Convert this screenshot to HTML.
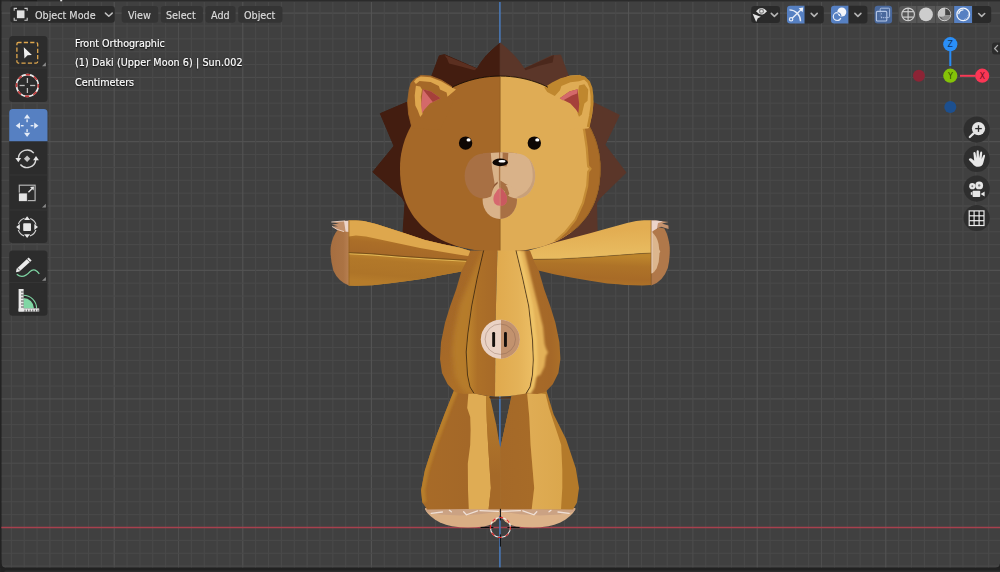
<!DOCTYPE html>
<html><head><meta charset="utf-8"><title>Blender viewport</title>
<style>
html,body{margin:0;padding:0;background:#212121;overflow:hidden}
#vp{position:absolute;left:0;top:0;width:1000px;height:572px;overflow:hidden;background:#212121;font-family:"DejaVu Sans Condensed","DejaVu Sans","Liberation Sans",sans-serif;font-stretch:condensed;font-size:10.7px;color:#e0e0e0}
svg{position:absolute;left:0;top:0}
.t{position:absolute;white-space:nowrap;line-height:13px;will-change:transform}
.ov{color:#fff;-webkit-text-stroke:0.2px rgba(255,255,255,.9);text-shadow:0 1px 1.5px rgba(0,0,0,.85),0 0 2px rgba(0,0,0,.6)}
.btn{position:absolute;background:#2b2b2b;border-radius:3.5px}
.menu{position:absolute;background:#343434;border-radius:3.5px;top:6px;height:17px}
</style></head><body>
<div id="vp">
<svg width="1000" height="572" viewBox="0 0 1000 572">
<rect x="1.3" y="1" width="998.7" height="566.7" rx="4.5" fill="#404040"/>
<rect x="1.3" y="1" width="998.7" height="10" fill="#404040"/>
<g stroke-width="1" shape-rendering="auto">
<line x1="1.5" y1="13.10" x2="1000" y2="13.10" stroke="#555555"/>
<line x1="1.5" y1="25.96" x2="1000" y2="25.96" stroke="#4a4a4a"/>
<line x1="11.32" y1="2" x2="11.32" y2="567.6" stroke="#4a4a4a"/>
<line x1="1.5" y1="38.82" x2="1000" y2="38.82" stroke="#4a4a4a"/>
<line x1="24.18" y1="2" x2="24.18" y2="567.6" stroke="#4a4a4a"/>
<line x1="1.5" y1="51.68" x2="1000" y2="51.68" stroke="#4a4a4a"/>
<line x1="37.04" y1="2" x2="37.04" y2="567.6" stroke="#4a4a4a"/>
<line x1="1.5" y1="64.54" x2="1000" y2="64.54" stroke="#4a4a4a"/>
<line x1="49.90" y1="2" x2="49.90" y2="567.6" stroke="#4e4e4e"/>
<line x1="1.5" y1="77.40" x2="1000" y2="77.40" stroke="#4e4e4e"/>
<line x1="62.76" y1="2" x2="62.76" y2="567.6" stroke="#4a4a4a"/>
<line x1="1.5" y1="90.26" x2="1000" y2="90.26" stroke="#4a4a4a"/>
<line x1="75.62" y1="2" x2="75.62" y2="567.6" stroke="#4a4a4a"/>
<line x1="1.5" y1="103.12" x2="1000" y2="103.12" stroke="#4a4a4a"/>
<line x1="88.48" y1="2" x2="88.48" y2="567.6" stroke="#4a4a4a"/>
<line x1="1.5" y1="115.98" x2="1000" y2="115.98" stroke="#4a4a4a"/>
<line x1="101.34" y1="2" x2="101.34" y2="567.6" stroke="#4a4a4a"/>
<line x1="1.5" y1="128.84" x2="1000" y2="128.84" stroke="#4a4a4a"/>
<line x1="114.20" y1="2" x2="114.20" y2="567.6" stroke="#555555"/>
<line x1="1.5" y1="141.70" x2="1000" y2="141.70" stroke="#555555"/>
<line x1="127.06" y1="2" x2="127.06" y2="567.6" stroke="#4a4a4a"/>
<line x1="1.5" y1="154.56" x2="1000" y2="154.56" stroke="#4a4a4a"/>
<line x1="139.92" y1="2" x2="139.92" y2="567.6" stroke="#4a4a4a"/>
<line x1="1.5" y1="167.42" x2="1000" y2="167.42" stroke="#4a4a4a"/>
<line x1="152.78" y1="2" x2="152.78" y2="567.6" stroke="#4a4a4a"/>
<line x1="1.5" y1="180.28" x2="1000" y2="180.28" stroke="#4a4a4a"/>
<line x1="165.64" y1="2" x2="165.64" y2="567.6" stroke="#4a4a4a"/>
<line x1="1.5" y1="193.14" x2="1000" y2="193.14" stroke="#4a4a4a"/>
<line x1="178.50" y1="2" x2="178.50" y2="567.6" stroke="#4e4e4e"/>
<line x1="1.5" y1="206.00" x2="1000" y2="206.00" stroke="#4e4e4e"/>
<line x1="191.36" y1="2" x2="191.36" y2="567.6" stroke="#4a4a4a"/>
<line x1="1.5" y1="218.86" x2="1000" y2="218.86" stroke="#4a4a4a"/>
<line x1="204.22" y1="2" x2="204.22" y2="567.6" stroke="#4a4a4a"/>
<line x1="1.5" y1="231.72" x2="1000" y2="231.72" stroke="#4a4a4a"/>
<line x1="217.08" y1="2" x2="217.08" y2="567.6" stroke="#4a4a4a"/>
<line x1="1.5" y1="244.58" x2="1000" y2="244.58" stroke="#4a4a4a"/>
<line x1="229.94" y1="2" x2="229.94" y2="567.6" stroke="#4a4a4a"/>
<line x1="1.5" y1="257.44" x2="1000" y2="257.44" stroke="#4a4a4a"/>
<line x1="242.80" y1="2" x2="242.80" y2="567.6" stroke="#555555"/>
<line x1="1.5" y1="270.30" x2="1000" y2="270.30" stroke="#555555"/>
<line x1="255.66" y1="2" x2="255.66" y2="567.6" stroke="#4a4a4a"/>
<line x1="1.5" y1="283.16" x2="1000" y2="283.16" stroke="#4a4a4a"/>
<line x1="268.52" y1="2" x2="268.52" y2="567.6" stroke="#4a4a4a"/>
<line x1="1.5" y1="296.02" x2="1000" y2="296.02" stroke="#4a4a4a"/>
<line x1="281.38" y1="2" x2="281.38" y2="567.6" stroke="#4a4a4a"/>
<line x1="1.5" y1="308.88" x2="1000" y2="308.88" stroke="#4a4a4a"/>
<line x1="294.24" y1="2" x2="294.24" y2="567.6" stroke="#4a4a4a"/>
<line x1="1.5" y1="321.74" x2="1000" y2="321.74" stroke="#4a4a4a"/>
<line x1="307.10" y1="2" x2="307.10" y2="567.6" stroke="#4e4e4e"/>
<line x1="1.5" y1="334.60" x2="1000" y2="334.60" stroke="#4e4e4e"/>
<line x1="319.96" y1="2" x2="319.96" y2="567.6" stroke="#4a4a4a"/>
<line x1="1.5" y1="347.46" x2="1000" y2="347.46" stroke="#4a4a4a"/>
<line x1="332.82" y1="2" x2="332.82" y2="567.6" stroke="#4a4a4a"/>
<line x1="1.5" y1="360.32" x2="1000" y2="360.32" stroke="#4a4a4a"/>
<line x1="345.68" y1="2" x2="345.68" y2="567.6" stroke="#4a4a4a"/>
<line x1="1.5" y1="373.18" x2="1000" y2="373.18" stroke="#4a4a4a"/>
<line x1="358.54" y1="2" x2="358.54" y2="567.6" stroke="#4a4a4a"/>
<line x1="1.5" y1="386.04" x2="1000" y2="386.04" stroke="#4a4a4a"/>
<line x1="371.40" y1="2" x2="371.40" y2="567.6" stroke="#555555"/>
<line x1="1.5" y1="398.90" x2="1000" y2="398.90" stroke="#555555"/>
<line x1="384.26" y1="2" x2="384.26" y2="567.6" stroke="#4a4a4a"/>
<line x1="1.5" y1="411.76" x2="1000" y2="411.76" stroke="#4a4a4a"/>
<line x1="397.12" y1="2" x2="397.12" y2="567.6" stroke="#4a4a4a"/>
<line x1="1.5" y1="424.62" x2="1000" y2="424.62" stroke="#4a4a4a"/>
<line x1="409.98" y1="2" x2="409.98" y2="567.6" stroke="#4a4a4a"/>
<line x1="1.5" y1="437.48" x2="1000" y2="437.48" stroke="#4a4a4a"/>
<line x1="422.84" y1="2" x2="422.84" y2="567.6" stroke="#4a4a4a"/>
<line x1="1.5" y1="450.34" x2="1000" y2="450.34" stroke="#4a4a4a"/>
<line x1="435.70" y1="2" x2="435.70" y2="567.6" stroke="#4e4e4e"/>
<line x1="1.5" y1="463.20" x2="1000" y2="463.20" stroke="#4e4e4e"/>
<line x1="448.56" y1="2" x2="448.56" y2="567.6" stroke="#4a4a4a"/>
<line x1="1.5" y1="476.06" x2="1000" y2="476.06" stroke="#4a4a4a"/>
<line x1="461.42" y1="2" x2="461.42" y2="567.6" stroke="#4a4a4a"/>
<line x1="1.5" y1="488.92" x2="1000" y2="488.92" stroke="#4a4a4a"/>
<line x1="474.28" y1="2" x2="474.28" y2="567.6" stroke="#4a4a4a"/>
<line x1="1.5" y1="501.78" x2="1000" y2="501.78" stroke="#4a4a4a"/>
<line x1="487.14" y1="2" x2="487.14" y2="567.6" stroke="#4a4a4a"/>
<line x1="1.5" y1="514.64" x2="1000" y2="514.64" stroke="#4a4a4a"/>
<line x1="512.86" y1="2" x2="512.86" y2="567.6" stroke="#4a4a4a"/>
<line x1="1.5" y1="540.36" x2="1000" y2="540.36" stroke="#4a4a4a"/>
<line x1="525.72" y1="2" x2="525.72" y2="567.6" stroke="#4a4a4a"/>
<line x1="1.5" y1="553.22" x2="1000" y2="553.22" stroke="#4a4a4a"/>
<line x1="538.58" y1="2" x2="538.58" y2="567.6" stroke="#4a4a4a"/>
<line x1="1.5" y1="566.08" x2="1000" y2="566.08" stroke="#4a4a4a"/>
<line x1="551.44" y1="2" x2="551.44" y2="567.6" stroke="#4a4a4a"/>
<line x1="564.30" y1="2" x2="564.30" y2="567.6" stroke="#4e4e4e"/>
<line x1="577.16" y1="2" x2="577.16" y2="567.6" stroke="#4a4a4a"/>
<line x1="590.02" y1="2" x2="590.02" y2="567.6" stroke="#4a4a4a"/>
<line x1="602.88" y1="2" x2="602.88" y2="567.6" stroke="#4a4a4a"/>
<line x1="615.74" y1="2" x2="615.74" y2="567.6" stroke="#4a4a4a"/>
<line x1="628.60" y1="2" x2="628.60" y2="567.6" stroke="#555555"/>
<line x1="641.46" y1="2" x2="641.46" y2="567.6" stroke="#4a4a4a"/>
<line x1="654.32" y1="2" x2="654.32" y2="567.6" stroke="#4a4a4a"/>
<line x1="667.18" y1="2" x2="667.18" y2="567.6" stroke="#4a4a4a"/>
<line x1="680.04" y1="2" x2="680.04" y2="567.6" stroke="#4a4a4a"/>
<line x1="692.90" y1="2" x2="692.90" y2="567.6" stroke="#4e4e4e"/>
<line x1="705.76" y1="2" x2="705.76" y2="567.6" stroke="#4a4a4a"/>
<line x1="718.62" y1="2" x2="718.62" y2="567.6" stroke="#4a4a4a"/>
<line x1="731.48" y1="2" x2="731.48" y2="567.6" stroke="#4a4a4a"/>
<line x1="744.34" y1="2" x2="744.34" y2="567.6" stroke="#4a4a4a"/>
<line x1="757.20" y1="2" x2="757.20" y2="567.6" stroke="#555555"/>
<line x1="770.06" y1="2" x2="770.06" y2="567.6" stroke="#4a4a4a"/>
<line x1="782.92" y1="2" x2="782.92" y2="567.6" stroke="#4a4a4a"/>
<line x1="795.78" y1="2" x2="795.78" y2="567.6" stroke="#4a4a4a"/>
<line x1="808.64" y1="2" x2="808.64" y2="567.6" stroke="#4a4a4a"/>
<line x1="821.50" y1="2" x2="821.50" y2="567.6" stroke="#4e4e4e"/>
<line x1="834.36" y1="2" x2="834.36" y2="567.6" stroke="#4a4a4a"/>
<line x1="847.22" y1="2" x2="847.22" y2="567.6" stroke="#4a4a4a"/>
<line x1="860.08" y1="2" x2="860.08" y2="567.6" stroke="#4a4a4a"/>
<line x1="872.94" y1="2" x2="872.94" y2="567.6" stroke="#4a4a4a"/>
<line x1="885.80" y1="2" x2="885.80" y2="567.6" stroke="#555555"/>
<line x1="898.66" y1="2" x2="898.66" y2="567.6" stroke="#4a4a4a"/>
<line x1="911.52" y1="2" x2="911.52" y2="567.6" stroke="#4a4a4a"/>
<line x1="924.38" y1="2" x2="924.38" y2="567.6" stroke="#4a4a4a"/>
<line x1="937.24" y1="2" x2="937.24" y2="567.6" stroke="#4a4a4a"/>
<line x1="950.10" y1="2" x2="950.10" y2="567.6" stroke="#4e4e4e"/>
<line x1="962.96" y1="2" x2="962.96" y2="567.6" stroke="#4a4a4a"/>
<line x1="975.82" y1="2" x2="975.82" y2="567.6" stroke="#4a4a4a"/>
<line x1="988.68" y1="2" x2="988.68" y2="567.6" stroke="#4a4a4a"/>
</g>
<!-- axes -->
<line x1="0" y1="527.5" x2="1000" y2="527.5" stroke="#a8404e" stroke-width="1.6"/>
<line x1="499.9" y1="2" x2="499.9" y2="567.6" stroke="#4a78b5" stroke-width="1.6"/>
<defs>
<clipPath id="cl"><rect x="0" y="0" width="500.2" height="572"/></clipPath>
<clipPath id="cr"><rect x="500.2" y="0" width="500" height="572"/></clipPath>
<clipPath id="chead"><path d="M600.4,168.0 L600.3,174.4 L599.9,179.7 L599.3,184.6 L598.5,189.3 L597.4,193.8 L596.1,198.1 L594.6,202.2 L592.8,206.2 L590.8,210.0 L588.6,213.7 L586.2,217.2 L583.5,220.6 L580.7,223.8 L577.6,226.9 L574.3,229.8 L570.9,232.5 L567.2,235.1 L563.3,237.4 L559.3,239.7 L555.0,241.7 L550.6,243.5 L546.0,245.2 L541.3,246.7 L536.3,247.9 L531.1,249.0 L525.8,249.9 L520.2,250.6 L514.3,251.1 L507.9,251.4 L500.2,251.5 L492.5,251.4 L486.1,251.1 L480.2,250.6 L474.6,249.9 L469.3,249.0 L464.1,247.9 L459.1,246.7 L454.4,245.2 L449.8,243.5 L445.4,241.7 L441.1,239.7 L437.1,237.4 L433.2,235.1 L429.5,232.5 L426.1,229.8 L422.8,226.9 L419.7,223.8 L416.9,220.6 L414.2,217.2 L411.8,213.7 L409.6,210.0 L407.6,206.2 L405.8,202.2 L404.3,198.1 L403.0,193.8 L401.9,189.3 L401.1,184.6 L400.5,179.7 L400.1,174.4 L400.0,168.0 L400.1,163.2 L400.5,158.4 L401.2,153.6 L402.2,148.9 L403.4,144.2 L404.9,139.6 L406.7,135.1 L408.7,130.6 L410.9,126.3 L413.4,122.1 L416.2,117.9 L419.1,114.0 L422.3,110.2 L425.7,106.5 L429.3,103.0 L433.2,99.7 L437.1,96.6 L441.3,93.7 L445.6,90.9 L450.1,88.4 L454.7,86.1 L459.4,84.0 L464.3,82.2 L469.2,80.6 L474.3,79.2 L479.4,78.1 L484.5,77.2 L489.7,76.6 L495.0,76.2 L500.2,76.1 L505.4,76.2 L510.7,76.6 L515.9,77.2 L521.0,78.1 L526.1,79.2 L531.2,80.6 L536.1,82.2 L541.0,84.0 L545.7,86.1 L550.3,88.4 L554.8,90.9 L559.1,93.7 L563.3,96.6 L567.2,99.7 L571.1,103.0 L574.7,106.5 L578.1,110.2 L581.3,114.0 L584.2,117.9 L587.0,122.1 L589.5,126.3 L591.7,130.6 L593.7,135.1 L595.5,139.6 L597.0,144.2 L598.2,148.9 L599.2,153.6 L599.9,158.4 L600.3,163.2Z"/></clipPath>
<linearGradient id="gBody" gradientUnits="userSpaceOnUse" x1="440" y1="0" x2="560" y2="0"><stop offset="0" stop-color="#a86c24"/><stop offset="0.1" stop-color="#c48e30"/><stop offset="0.2" stop-color="#cf9a38"/><stop offset="0.235" stop-color="#c9922f"/><stop offset="0.25" stop-color="#b67a28"/><stop offset="0.4" stop-color="#bb802a"/><stop offset="0.47" stop-color="#c48a30"/><stop offset="0.478" stop-color="#e4b258"/><stop offset="0.72" stop-color="#e2ad50"/><stop offset="0.77" stop-color="#c79032"/><stop offset="0.88" stop-color="#bd862e"/><stop offset="0.92" stop-color="#d8a444"/><stop offset="1" stop-color="#dca848"/></linearGradient>
<linearGradient id="gLegL" gradientUnits="userSpaceOnUse" x1="421" y1="0" x2="500" y2="0"><stop offset="0" stop-color="#b27626"/><stop offset="0.3" stop-color="#bd842c"/><stop offset="0.58" stop-color="#c48c30"/><stop offset="0.6" stop-color="#e2ab4e"/><stop offset="0.84" stop-color="#e0a84a"/><stop offset="0.88" stop-color="#b67c2a"/><stop offset="1" stop-color="#b0762a"/></linearGradient>
<linearGradient id="gLegR" gradientUnits="userSpaceOnUse" x1="500" y1="0" x2="579" y2="0"><stop offset="0" stop-color="#a86c26"/><stop offset="0.33" stop-color="#aa7026"/><stop offset="0.36" stop-color="#dba446"/><stop offset="0.6" stop-color="#d49a3c"/><stop offset="0.8" stop-color="#c08830"/><stop offset="1" stop-color="#b47a2a"/></linearGradient>
</defs>
<path d="M500.2,43 L493.6,48.6 L486.6,55.2 L481,62.4 L477,68.8 L444.5,54.6 L439.3,55.8 L431,78 L420,100 L406,102.6 L380.3,113.6 L394,146 L372.8,172 L402,197.5 L405,203 L402.5,240 L500.2,250 Z" fill="#431d10" stroke="#431d10" stroke-width="1" stroke-linejoin="round"/>
<path d="M500.2,43 L506.8,48.6 L513.8,55.2 L519.8,62.4 L524.2,68.8 L551,56 L560.5,55 L568,75 L580,100 L593.5,102.5 L619.3,115.2 L604.9,144.8 L626,172.6 L600,198 L596.5,203 L597.3,240 L500.2,250 Z" fill="#5b3629" stroke="#5b3629" stroke-width="1" stroke-linejoin="round"/>
<path d="M444.5,55 L476.8,68.6 L474.5,70.2 L461,66.4 L449,63.4 L447,58.4 Z" fill="#5b2f20"/>
<path d="M524.2,68.6 L554,55 L552.6,62.6 L539,65.8 L525.6,70.2 Z" fill="#4b281c"/>
<path d="M600.4,168.0 L600.3,174.4 L599.9,179.7 L599.3,184.6 L598.5,189.3 L597.4,193.8 L596.1,198.1 L594.6,202.2 L592.8,206.2 L590.8,210.0 L588.6,213.7 L586.2,217.2 L583.5,220.6 L580.7,223.8 L577.6,226.9 L574.3,229.8 L570.9,232.5 L567.2,235.1 L563.3,237.4 L559.3,239.7 L555.0,241.7 L550.6,243.5 L546.0,245.2 L541.3,246.7 L536.3,247.9 L531.1,249.0 L525.8,249.9 L520.2,250.6 L514.3,251.1 L507.9,251.4 L500.2,251.5 L492.5,251.4 L486.1,251.1 L480.2,250.6 L474.6,249.9 L469.3,249.0 L464.1,247.9 L459.1,246.7 L454.4,245.2 L449.8,243.5 L445.4,241.7 L441.1,239.7 L437.1,237.4 L433.2,235.1 L429.5,232.5 L426.1,229.8 L422.8,226.9 L419.7,223.8 L416.9,220.6 L414.2,217.2 L411.8,213.7 L409.6,210.0 L407.6,206.2 L405.8,202.2 L404.3,198.1 L403.0,193.8 L401.9,189.3 L401.1,184.6 L400.5,179.7 L400.1,174.4 L400.0,168.0 L400.1,163.2 L400.5,158.4 L401.2,153.6 L402.2,148.9 L403.4,144.2 L404.9,139.6 L406.7,135.1 L408.7,130.6 L410.9,126.3 L413.4,122.1 L416.2,117.9 L419.1,114.0 L422.3,110.2 L425.7,106.5 L429.3,103.0 L433.2,99.7 L437.1,96.6 L441.3,93.7 L445.6,90.9 L450.1,88.4 L454.7,86.1 L459.4,84.0 L464.3,82.2 L469.2,80.6 L474.3,79.2 L479.4,78.1 L484.5,77.2 L489.7,76.6 L495.0,76.2 L500.2,76.1 L505.4,76.2 L510.7,76.6 L515.9,77.2 L521.0,78.1 L526.1,79.2 L531.2,80.6 L536.1,82.2 L541.0,84.0 L545.7,86.1 L550.3,88.4 L554.8,90.9 L559.1,93.7 L563.3,96.6 L567.2,99.7 L571.1,103.0 L574.7,106.5 L578.1,110.2 L581.3,114.0 L584.2,117.9 L587.0,122.1 L589.5,126.3 L591.7,130.6 L593.7,135.1 L595.5,139.6 L597.0,144.2 L598.2,148.9 L599.2,153.6 L599.9,158.4 L600.3,163.2Z" fill="#a56828"/>
<path d="M600.4,168.0 L600.3,174.4 L599.9,179.7 L599.3,184.6 L598.5,189.3 L597.4,193.8 L596.1,198.1 L594.6,202.2 L592.8,206.2 L590.8,210.0 L588.6,213.7 L586.2,217.2 L583.5,220.6 L580.7,223.8 L577.6,226.9 L574.3,229.8 L570.9,232.5 L567.2,235.1 L563.3,237.4 L559.3,239.7 L555.0,241.7 L550.6,243.5 L546.0,245.2 L541.3,246.7 L536.3,247.9 L531.1,249.0 L525.8,249.9 L520.2,250.6 L514.3,251.1 L507.9,251.4 L500.2,251.5 L492.5,251.4 L486.1,251.1 L480.2,250.6 L474.6,249.9 L469.3,249.0 L464.1,247.9 L459.1,246.7 L454.4,245.2 L449.8,243.5 L445.4,241.7 L441.1,239.7 L437.1,237.4 L433.2,235.1 L429.5,232.5 L426.1,229.8 L422.8,226.9 L419.7,223.8 L416.9,220.6 L414.2,217.2 L411.8,213.7 L409.6,210.0 L407.6,206.2 L405.8,202.2 L404.3,198.1 L403.0,193.8 L401.9,189.3 L401.1,184.6 L400.5,179.7 L400.1,174.4 L400.0,168.0 L400.1,163.2 L400.5,158.4 L401.2,153.6 L402.2,148.9 L403.4,144.2 L404.9,139.6 L406.7,135.1 L408.7,130.6 L410.9,126.3 L413.4,122.1 L416.2,117.9 L419.1,114.0 L422.3,110.2 L425.7,106.5 L429.3,103.0 L433.2,99.7 L437.1,96.6 L441.3,93.7 L445.6,90.9 L450.1,88.4 L454.7,86.1 L459.4,84.0 L464.3,82.2 L469.2,80.6 L474.3,79.2 L479.4,78.1 L484.5,77.2 L489.7,76.6 L495.0,76.2 L500.2,76.1 L505.4,76.2 L510.7,76.6 L515.9,77.2 L521.0,78.1 L526.1,79.2 L531.2,80.6 L536.1,82.2 L541.0,84.0 L545.7,86.1 L550.3,88.4 L554.8,90.9 L559.1,93.7 L563.3,96.6 L567.2,99.7 L571.1,103.0 L574.7,106.5 L578.1,110.2 L581.3,114.0 L584.2,117.9 L587.0,122.1 L589.5,126.3 L591.7,130.6 L593.7,135.1 L595.5,139.6 L597.0,144.2 L598.2,148.9 L599.2,153.6 L599.9,158.4 L600.3,163.2Z" fill="#dfac55" clip-path="url(#cr)"/>
<g clip-path="url(#chead)"><polygon points="577,106 581,117 584.3,131 586.8,148 587.8,162 588.2,166.4 590.6,168.8 588.2,171.6 587.2,186 583,203 575.4,219.6 565.4,232 555,241.6 620,245 620,100" fill="#a96c28"/><polyline points="577,106 581,117 584.3,131 586.8,148 587.8,162 588.2,166.4 590.6,168.8 588.2,171.6 587.2,186 583,203 575.4,219.6 565.4,232 555,241.6" fill="none" stroke="#c48c36" stroke-width="2.2" stroke-linejoin="round"/></g>
<clipPath id="crim"><rect x="570" y="120" width="40" height="112"/></clipPath>
<path d="M600.4,168.0 L600.3,174.4 L599.9,179.7 L599.3,184.6 L598.5,189.3 L597.4,193.8 L596.1,198.1 L594.6,202.2 L592.8,206.2 L590.8,210.0 L588.6,213.7 L586.2,217.2 L583.5,220.6 L580.7,223.8 L577.6,226.9 L574.3,229.8 L570.9,232.5 L567.2,235.1 L563.3,237.4 L559.3,239.7 L555.0,241.7 L550.6,243.5 L546.0,245.2 L541.3,246.7 L536.3,247.9 L531.1,249.0 L525.8,249.9 L520.2,250.6 L514.3,251.1 L507.9,251.4 L500.2,251.5 L492.5,251.4 L486.1,251.1 L480.2,250.6 L474.6,249.9 L469.3,249.0 L464.1,247.9 L459.1,246.7 L454.4,245.2 L449.8,243.5 L445.4,241.7 L441.1,239.7 L437.1,237.4 L433.2,235.1 L429.5,232.5 L426.1,229.8 L422.8,226.9 L419.7,223.8 L416.9,220.6 L414.2,217.2 L411.8,213.7 L409.6,210.0 L407.6,206.2 L405.8,202.2 L404.3,198.1 L403.0,193.8 L401.9,189.3 L401.1,184.6 L400.5,179.7 L400.1,174.4 L400.0,168.0 L400.1,163.2 L400.5,158.4 L401.2,153.6 L402.2,148.9 L403.4,144.2 L404.9,139.6 L406.7,135.1 L408.7,130.6 L410.9,126.3 L413.4,122.1 L416.2,117.9 L419.1,114.0 L422.3,110.2 L425.7,106.5 L429.3,103.0 L433.2,99.7 L437.1,96.6 L441.3,93.7 L445.6,90.9 L450.1,88.4 L454.7,86.1 L459.4,84.0 L464.3,82.2 L469.2,80.6 L474.3,79.2 L479.4,78.1 L484.5,77.2 L489.7,76.6 L495.0,76.2 L500.2,76.1 L505.4,76.2 L510.7,76.6 L515.9,77.2 L521.0,78.1 L526.1,79.2 L531.2,80.6 L536.1,82.2 L541.0,84.0 L545.7,86.1 L550.3,88.4 L554.8,90.9 L559.1,93.7 L563.3,96.6 L567.2,99.7 L571.1,103.0 L574.7,106.5 L578.1,110.2 L581.3,114.0 L584.2,117.9 L587.0,122.1 L589.5,126.3 L591.7,130.6 L593.7,135.1 L595.5,139.6 L597.0,144.2 L598.2,148.9 L599.2,153.6 L599.9,158.4 L600.3,163.2Z" fill="none" stroke="#6a4014" stroke-width="0.8" opacity="0.55" clip-path="url(#crim)"/>
<polygon points="412.0,128.0 408.6,114.0 407.6,101.7 409.2,89.5 411.0,83.0 414.0,79.5 420.8,75.4 430.6,76.0 441.6,80.3 451.4,86.4 458.0,92.0 440.0,130.0" fill="#a56828" stroke="#a56828" stroke-width="0.8" stroke-linejoin="round"/>
<polygon points="414.0,81.5 416.5,78.6 420.8,76.6 430.6,77.2 441.6,81.4 451.4,87.2 456.0,89.4 447.4,96.8 446.6,92.6 440.0,89.6 438.8,86.0 430.6,82.0 419.6,81.0 415.9,84.0" fill="#dfa74e"/>
<polygon points="415.9,85.8 420.2,86.4 422.0,89.5 420.8,96.8 421.4,105.4 422.6,114.0 420.2,117.0 417.7,110.3 415.3,105.4 414.7,95.6" fill="#dfa74e"/>
<polygon points="422.8,89.3 431.0,91.5 440.6,98.2 430.0,103.5 424.5,109.5 422.0,113.2 421.2,104.0" fill="#d4696a"/>
<polygon points="422.8,89.3 431.0,91.5 440.6,98.2 432.8,102.0" fill="#a5403a"/>
<polygon points="588.4,128.0 591.8,114.0 592.8,101.7 591.2,89.5 589.4,83.0 586.4,79.5 579.6,75.4 569.8,76.0 558.8,80.3 549.0,86.4 542.4,92.0 560.4,130.0" fill="#dfac55" stroke="#dfac55" stroke-width="0.8" stroke-linejoin="round"/>
<polygon points="544.2,87.6 552.0,82.4 560.6,78.2 570.4,75.8 579.0,74.9 585.0,76.4 584.6,79.4 579.0,81.2 570.4,82.2 561.4,86.0 560.0,90.2 554.8,96.0 547.2,92.0" fill="#bf872e"/>
<polygon points="579.0,85.4 584.4,84.2 588.2,89.5 587.6,100.8 584.4,103.6 581.8,114.4 579.0,116.8 577.6,113.5 578.3,101.7 578.4,89.5" fill="#bf872e"/>
<polyline points="583.9,77.6 588.6,82.0 591.0,88.0 592.0,96.0 592.0,105.0 590.4,116.0 588.2,127.0" fill="none" stroke="#bf872e" stroke-width="2.8" stroke-linejoin="round"/>
<polygon points="577.6,89.3 569.4,91.5 559.8,98.2 570.4,103.5 575.9,109.5 578.4,113.2 579.2,104.0" fill="#a5403a"/>
<polygon points="577.6,89.3 569.4,91.5 559.8,98.2 563.0,100.4 571.9,95.4 577.2,93.6" fill="#d4696a"/>
<clipPath id="ctop"><rect x="452" y="70" width="96" height="30"/></clipPath>
<path d="M600.4,168.0 L600.3,174.4 L599.9,179.7 L599.3,184.6 L598.5,189.3 L597.4,193.8 L596.1,198.1 L594.6,202.2 L592.8,206.2 L590.8,210.0 L588.6,213.7 L586.2,217.2 L583.5,220.6 L580.7,223.8 L577.6,226.9 L574.3,229.8 L570.9,232.5 L567.2,235.1 L563.3,237.4 L559.3,239.7 L555.0,241.7 L550.6,243.5 L546.0,245.2 L541.3,246.7 L536.3,247.9 L531.1,249.0 L525.8,249.9 L520.2,250.6 L514.3,251.1 L507.9,251.4 L500.2,251.5 L492.5,251.4 L486.1,251.1 L480.2,250.6 L474.6,249.9 L469.3,249.0 L464.1,247.9 L459.1,246.7 L454.4,245.2 L449.8,243.5 L445.4,241.7 L441.1,239.7 L437.1,237.4 L433.2,235.1 L429.5,232.5 L426.1,229.8 L422.8,226.9 L419.7,223.8 L416.9,220.6 L414.2,217.2 L411.8,213.7 L409.6,210.0 L407.6,206.2 L405.8,202.2 L404.3,198.1 L403.0,193.8 L401.9,189.3 L401.1,184.6 L400.5,179.7 L400.1,174.4 L400.0,168.0 L400.1,163.2 L400.5,158.4 L401.2,153.6 L402.2,148.9 L403.4,144.2 L404.9,139.6 L406.7,135.1 L408.7,130.6 L410.9,126.3 L413.4,122.1 L416.2,117.9 L419.1,114.0 L422.3,110.2 L425.7,106.5 L429.3,103.0 L433.2,99.7 L437.1,96.6 L441.3,93.7 L445.6,90.9 L450.1,88.4 L454.7,86.1 L459.4,84.0 L464.3,82.2 L469.2,80.6 L474.3,79.2 L479.4,78.1 L484.5,77.2 L489.7,76.6 L495.0,76.2 L500.2,76.1 L505.4,76.2 L510.7,76.6 L515.9,77.2 L521.0,78.1 L526.1,79.2 L531.2,80.6 L536.1,82.2 L541.0,84.0 L545.7,86.1 L550.3,88.4 L554.8,90.9 L559.1,93.7 L563.3,96.6 L567.2,99.7 L571.1,103.0 L574.7,106.5 L578.1,110.2 L581.3,114.0 L584.2,117.9 L587.0,122.1 L589.5,126.3 L591.7,130.6 L593.7,135.1 L595.5,139.6 L597.0,144.2 L598.2,148.9 L599.2,153.6 L599.9,158.4 L600.3,163.2Z" fill="none" stroke="#140a04" stroke-width="1" opacity="0.85" clip-path="url(#ctop)"/>
<line x1="500.2" y1="77" x2="500.2" y2="251" stroke="#8a5a20" stroke-width="0.6"/>
<circle cx="465.6" cy="143.1" r="6.7" fill="#0e0704"/>
<ellipse cx="468.6" cy="139.9" rx="2.1" ry="1.7" fill="#fff"/>
<circle cx="534.3" cy="143.1" r="6.7" fill="#0e0704"/>
<ellipse cx="537.3" cy="139.9" rx="2.1" ry="1.7" fill="#fff"/>
<ellipse cx="499.8" cy="200" rx="17.2" ry="19" fill="#d9b289"/>
<ellipse cx="499.8" cy="200" rx="17.2" ry="19" fill="#a87044" clip-path="url(#cr)"/>
<ellipse cx="483.2" cy="176" rx="18.6" ry="22.5" fill="#a87044"/>
<ellipse cx="517" cy="176" rx="18.2" ry="22.5" fill="#d9b289"/>
<clipPath id="cchk"><ellipse cx="517" cy="176" rx="18.2" ry="22.5"/></clipPath>
<g clip-path="url(#cchk)"><path d="M526,154.5 Q534.4,165 532.3,181 Q529.4,192.4 516,197.4 L540,202 L540,150 Z" fill="#c8a07a"/></g>
<path d="M483,153.2 Q500,151.5 517,153.2 L517,185 L483,185 Z" fill="#a87044"/>
<path d="M500.2,152.3 Q509,152.3 517,153.2 L517,190 L500.2,181 Z" fill="#d9b289"/>
<path d="M490.8,152.9 L499,152.5 L498.9,168 L498.9,181 L500.2,180.6 L500.2,188.3 L496.7,192 L493.8,196.4 L491,197.4 L492.4,191 L494.8,185.4 L494.2,181 L492,168 Z" fill="#d9b289"/>
<path d="M502.6,152.6 L508.3,152.9 L507.8,162 L506.4,166.4 L502.6,166 Z" fill="#a87044"/>
<path d="M500.2,180.6 L503.5,182.5 L507.3,187.3 L509.4,194 L506.6,196.4 L504.4,191.2 L500.2,188.3 Z" fill="#a87044"/>
<path d="M497.7,181.5 L494.6,184.2 L492.6,188.6 L494.4,186.4 L497.6,183.4 Z" fill="#8a5432"/>
<path d="M500.2,180.6 L500.2,188.3 L499.2,187.6 L499.2,181 Z" fill="#8a5432" opacity="0.7"/>
<path d="M500.3,187.6 Q496.4,190 494.4,194.6 Q492.2,199.6 494.6,203.4 Q497,206.2 500.6,205.8 Q505.4,205.6 506.8,201.4 Q507.8,196.6 504.6,192.4 Q502.8,189.6 500.3,187.6 Z" fill="#d6686e"/>
<path d="M500.3,187.6 Q502.8,189.6 504.6,192.4 Q507.8,196.6 506.8,201.4 Q505.4,205.6 500.6,205.8 Z" fill="#c9595f"/>
<line x1="500.2" y1="166" x2="500.2" y2="219" stroke="#c9a070" stroke-width="0.5"/>
<ellipse cx="500.2" cy="162.4" rx="7.7" ry="3.8" fill="#0e0704"/>
<ellipse cx="502" cy="161.3" rx="3.5" ry="1.3" fill="#fff"/>
<defs>
<linearGradient id="gLLa" gradientUnits="userSpaceOnUse" x1="421" y1="0" x2="468" y2="0"><stop offset="0" stop-color="#a86b28"/><stop offset="1" stop-color="#a46828"/></linearGradient><linearGradient id="gLLc" gradientUnits="userSpaceOnUse" x1="0" y1="400" x2="0" y2="475"><stop offset="0" stop-color="#b67c2c"/><stop offset="1" stop-color="#a56928"/></linearGradient>
<linearGradient id="gLLedge" gradientUnits="userSpaceOnUse" x1="440" y1="400" x2="446" y2="402.4"><stop offset="0" stop-color="#ba802c"/><stop offset="0.6" stop-color="#b67c2b"/><stop offset="1" stop-color="#b67c2b" stop-opacity="0"/></linearGradient>
<linearGradient id="gLRb" gradientUnits="userSpaceOnUse" x1="530" y1="0" x2="562" y2="0"><stop offset="0" stop-color="#dfac54"/><stop offset="1" stop-color="#dba74d"/></linearGradient>
<linearGradient id="gLRa" gradientUnits="userSpaceOnUse" x1="500" y1="0" x2="532" y2="0"><stop offset="0" stop-color="#a56928"/><stop offset="1" stop-color="#a76b28"/></linearGradient>
<linearGradient id="gALm" gradientUnits="userSpaceOnUse" x1="401" y1="236" x2="399" y2="258"><stop offset="0" stop-color="#b87e2c"/><stop offset="0.4" stop-color="#ab6e28"/><stop offset="1" stop-color="#a56828"/></linearGradient>
<linearGradient id="gALb" gradientUnits="userSpaceOnUse" x1="400" y1="258" x2="398" y2="284"><stop offset="0" stop-color="#ba802c"/><stop offset="0.15" stop-color="#b27829"/><stop offset="0.7" stop-color="#ae7428"/><stop offset="1" stop-color="#b67c2b"/></linearGradient>
<linearGradient id="gARt" gradientUnits="userSpaceOnUse" x1="600" y1="230" x2="601" y2="255"><stop offset="0" stop-color="#e2ad52"/><stop offset="1" stop-color="#e8bb60"/></linearGradient>
<linearGradient id="gARb" gradientUnits="userSpaceOnUse" x1="600" y1="255" x2="599" y2="284"><stop offset="0" stop-color="#bd852c"/><stop offset="0.35" stop-color="#ae7328"/><stop offset="0.8" stop-color="#a86b27"/><stop offset="1" stop-color="#ad7128"/></linearGradient>
<linearGradient id="gBL" gradientUnits="userSpaceOnUse" x1="448" y1="306" x2="474" y2="313.3"><stop offset="0" stop-color="#a46727"/><stop offset="0.5" stop-color="#a76a28"/><stop offset="1" stop-color="#ac6f28"/></linearGradient>
<linearGradient id="gBCL" gradientUnits="userSpaceOnUse" x1="467" y1="0" x2="497" y2="0"><stop offset="0" stop-color="#bf862e"/><stop offset="0.35" stop-color="#ad7028"/><stop offset="1" stop-color="#a66928"/></linearGradient>
<linearGradient id="gBCR" gradientUnits="userSpaceOnUse" x1="497" y1="0" x2="533" y2="0"><stop offset="0" stop-color="#e0aa4e"/><stop offset="0.6" stop-color="#e4b258"/><stop offset="1" stop-color="#ecbe64"/></linearGradient>
<linearGradient id="gBR" gradientUnits="userSpaceOnUse" x1="530" y1="0" x2="560" y2="0"><stop offset="0" stop-color="#a76a28"/><stop offset="0.7" stop-color="#a56828"/><stop offset="1" stop-color="#ab6f28"/></linearGradient>
<linearGradient id="gTerm" gradientUnits="userSpaceOnUse" x1="532" y1="345" x2="546" y2="342"><stop offset="0" stop-color="#efc468"/><stop offset="0.5" stop-color="#e8b95e"/><stop offset="0.85" stop-color="#dca64e"/><stop offset="1" stop-color="#cf9840"/></linearGradient>
</defs>
<polygon points="425.2,508.0 425.2,509.6 427.4,513.0 430.4,516.0 434.8,519.4 440.0,522.4 446.0,524.8 452.0,526.3 460.0,527.2 468.0,527.4 476.0,527.2 484.0,526.4 489.0,525.2 492.0,523.8 495.6,521.2 498.4,517.8 500.2,514.6 500.2,508.0" fill="#d9ae84"/>
<polygon points="575.2,508.0 575.2,509.6 573.0,513.0 570.0,516.0 565.6,519.4 560.4,522.4 554.4,524.8 548.4,526.3 540.4,527.2 532.4,527.4 524.4,527.2 516.4,526.4 511.4,525.2 508.4,523.8 504.8,521.2 502.0,517.8 500.2,514.6 500.2,508.0" fill="#dcb289"/>
<clipPath id="cfeet"><polygon points="425.2,508.0 425.2,509.6 427.4,513.0 430.4,516.0 434.8,519.4 440.0,522.4 446.0,524.8 452.0,526.3 460.0,527.2 468.0,527.4 476.0,527.2 484.0,526.4 489.0,525.2 492.0,523.8 495.6,521.2 498.4,517.8 500.2,514.6 500.2,508.0"/><polygon points="575.2,508.0 575.2,509.6 573.0,513.0 570.0,516.0 565.6,519.4 560.4,522.4 554.4,524.8 548.4,526.3 540.4,527.2 532.4,527.4 524.4,527.2 516.4,526.4 511.4,525.2 508.4,523.8 504.8,521.2 502.0,517.8 500.2,514.6 500.2,508.0"/></clipPath>
<g clip-path="url(#cfeet)"><polygon points="424.0,508.0 576.4,508.0 576.4,511.5 560.0,514.4 540.0,515.4 520.0,514.2 500.2,511.6 480.0,514.2 460.0,515.4 440.0,514.4 424.0,511.5" fill="#cba283"/>
<polyline points="431.2,513.3 442.4,512.0" fill="none" stroke="#f3e6de" stroke-width="1.3" stroke-linecap="round" opacity="0.9"/>
<polyline points="569.2,513.3 558.0,512.0" fill="none" stroke="#f3e6de" stroke-width="1.3" stroke-linecap="round" opacity="0.9"/>
<polyline points="449.4,510.2 451.4,511.8" fill="none" stroke="#f3e6de" stroke-width="1.3" stroke-linecap="round" opacity="0.9"/>
<polyline points="551.0,510.2 549.0,511.8" fill="none" stroke="#f3e6de" stroke-width="1.3" stroke-linecap="round" opacity="0.9"/>
<polyline points="463.6,511.8 466.4,514.8 477.6,510.8" fill="none" stroke="#f3e6de" stroke-width="1.3" stroke-linecap="round" opacity="0.9"/>
<polyline points="536.8,511.8 534.0,514.8 522.8,510.8" fill="none" stroke="#f3e6de" stroke-width="1.3" stroke-linecap="round" opacity="0.9"/>
<polyline points="480.0,510.7 498.4,511.4" fill="none" stroke="#f3e6de" stroke-width="1.3" stroke-linecap="round" opacity="0.9"/>
<polyline points="520.4,510.7 502.0,511.4" fill="none" stroke="#f3e6de" stroke-width="1.3" stroke-linecap="round" opacity="0.9"/>
</g>
<polygon points="454.2,390.0 444.4,414.5 433.4,443.8 424.8,470.8 421.1,490.3 422.3,502.6 427.2,509.6 468.0,509.0 500.2,509.0 500.2,448.7 488.4,396.0" fill="url(#gLLa)"/>
<clipPath id="cLegL"><polygon points="454.2,390.0 444.4,414.5 433.4,443.8 424.8,470.8 421.1,490.3 422.3,502.6 427.2,509.6 468.0,509.0 500.2,509.0 500.2,448.7 488.4,396.0"/></clipPath>
<filter id="fb2" x="-20%" y="-20%" width="140%" height="140%"><feGaussianBlur stdDeviation="0.8"/></filter>
<g clip-path="url(#cLegL)"><polyline points="454.2,390.0 444.4,414.5 433.4,443.8 424.8,470.8 421.1,490.3 422.3,502.6" fill="none" stroke="#b87e2c" stroke-width="8" filter="url(#fb2)"/></g>
<polygon points="468.5,392.0 467.2,408.1 470.2,416.9 470.6,430.0 470.2,445.0 467.8,463.4 468.0,490.0 468.8,509.2 488.6,509.2 490.9,488.0 488.1,445.0 486.8,421.2 486.0,396.0" fill="#dfac54"/>
<polygon points="486.0,396.0 486.8,421.2 488.1,445.0 490.9,488.0 488.6,509.2 500.2,509.2 500.2,448.7 496.4,425.6 490.3,398.5 489.0,395.0" fill="url(#gLLc)"/>
<polygon points="546.2,390.0 553.7,414.5 566.0,439.0 575.8,468.3 579.0,487.9 577.0,502.6 573.0,509.6 532.0,509.0 500.2,509.0 500.2,448.7 511.6,396.0" fill="#b47a2a"/>
<polygon points="511.6,396.0 500.2,448.7 500.2,509.2 531.7,509.2 534.2,488.0 530.6,445.0 529.3,416.9 527.0,392.0" fill="url(#gLRa)"/>
<polygon points="527.0,392.0 529.3,416.9 530.6,445.0 534.2,488.0 531.7,509.2 561.0,509.2 562.3,488.0 562.3,470.0 561.2,445.0 557.7,434.3 553.3,421.2 549.0,408.0 545.5,394.0" fill="url(#gLRb)"/>
<defs><linearGradient id="gHL" gradientUnits="userSpaceOnUse" x1="330" y1="0" x2="349" y2="0"><stop offset="0" stop-color="#a66e40"/><stop offset="0.7" stop-color="#ab7344"/><stop offset="1" stop-color="#b88052"/></linearGradient></defs>
<path d="M349,229.4 L338,229.6 Q332.4,236 330.7,247 Q329.8,257.5 333.4,270.7 Q338.4,281.6 349,285.5 Z" fill="url(#gHL)"/>
<path d="M331.3,221.9 L345,220.7 L349,220.8 L349,232 L343,231.4 L337,229.6 L332.4,226.6 L338,226.2 L331.8,224.4 L339,223.4 Z" fill="#c2906c"/>
<path d="M344,221 L349,220.8 L349,232 L345.6,231.6 Z" fill="#ecd4ca"/>
<path d="M331.3,222 L345,220.9" fill="none" stroke="#f0dcd2" stroke-width="0.8"/>
<path d="M332,226.4 L337,229.4 L344,231.6" fill="none" stroke="#f0dcd2" stroke-width="0.8"/>
<polygon points="348.8,220.6 356.0,220.4 363.7,221.1 376.0,224.0 390.0,228.6 407.0,234.0 425.0,240.0 443.0,244.2 460.0,247.8 471.2,251.3 474.0,264.0 461.6,271.4 442.4,275.0 425.0,278.4 407.4,281.0 390.0,283.3 372.4,285.2 355.0,285.8 348.8,285.4" fill="#c18a31"/>
<polygon points="348.8,220.6 356.0,220.4 363.7,221.1 376.0,224.0 390.0,228.6 407.0,234.0 425.0,240.0 443.0,244.2 460.0,247.8 471.2,251.3 470.0,260.4 430.0,258.2 400.0,256.2 372.0,253.8 348.8,252.6" fill="url(#gALm)"/>
<polygon points="348.8,252.6 372.0,253.8 400.0,256.2 430.0,258.2 470.0,260.4 474.0,264.0 461.6,271.4 442.4,275.0 425.0,278.4 407.4,281.0 390.0,283.3 372.4,285.2 355.0,285.8 348.8,285.4" fill="url(#gALb)"/>
<polygon points="348.8,220.6 356.0,220.4 363.7,221.1 376.0,224.0 390.0,228.6 407.0,234.0 425.0,240.0 443.0,244.2 460.0,247.8 471.2,251.3 471.0,256.5 458.0,254.6 440.0,251.6 420.0,248.0 400.0,243.8 380.0,239.4 366.0,236.4 356.0,235.6 348.8,236.4" fill="#dea74d"/>
<polyline points="348.8,253.7 372.0,254.9 400.0,257.3 430.0,259.3 470.0,261.5" fill="none" stroke="#e2b655" stroke-width="1.1"/>
<polyline points="348.8,252.6 372.0,253.8 400.0,256.2 430.0,258.2 470.0,260.4" fill="none" stroke="#3a2408" stroke-width="0.7" opacity="0.75"/>
<line x1="349" y1="220.6" x2="349" y2="285.4" stroke="#8a5a24" stroke-width="0.6"/>
<path d="M651.2,231 Q655,228.6 660,227.4 L664.4,228.4 Q668.6,236 669.7,247 Q670.2,258 667.8,268 Q663,281.8 651.2,285.5 Z" fill="#b0784a"/>
<path d="M651.2,231.5 Q657,236 658.6,244 L659.2,249.6 L660.3,251.4 L659.4,253.4 Q659.6,262 656.6,268.6 Q654.4,272.6 651.2,274 Z" fill="#dcb68e"/><rect x="651.1" y="221" width="1.3" height="52" fill="#ead4c8"/>
<path d="M651.2,220.4 L656,220.6 L668.6,222 L662,223.6 L668.4,225.4 L668.6,229 L661,226.8 L657,228.4 L651.2,232 Z" fill="#c4926e"/>
<path d="M651.2,220.4 L656,220.6 L663,221.5 L658,223 L657,228.4 L651.2,232 Z" fill="#ecd4ca"/>
<polygon points="528.7,250.5 540.0,247.2 555.0,242.6 572.0,238.0 590.0,233.2 607.0,228.4 618.0,225.5 627.0,223.0 636.2,220.9 644.0,220.3 651.1,220.3 651.1,253.0 640.0,253.6 620.0,255.1 590.0,257.2 560.0,258.9 528.7,259.4" fill="url(#gARt)"/>
<polygon points="528.7,259.4 560.0,258.9 590.0,257.2 620.0,255.1 640.0,253.6 651.1,253.0 651.1,285.0 642.4,285.6 625.0,285.0 618.0,284.2 607.4,283.4 590.0,280.7 572.4,277.8 555.0,274.4 538.4,270.6 526.0,262.0" fill="url(#gARb)"/>
<polyline points="528.7,259.4 560.0,258.9 590.0,257.2 620.0,255.1 640.0,253.6 651.1,253.0" fill="none" stroke="#4a3010" stroke-width="0.6" opacity="0.6"/>
<line x1="651.1" y1="220.4" x2="651.1" y2="285.4" stroke="#8a5a24" stroke-width="0.6"/>
<polygon points="470.4,250.5 466.0,262.0 461.5,271.0 456.2,289.2 450.2,306.0 445.0,322.7 441.0,342.3 440.0,359.0 442.0,373.0 447.6,384.3 455.0,392.0 463.0,394.0 474.0,393.4 470.0,387.0 467.5,375.0 466.2,352.0 467.8,334.0 471.7,306.0 477.2,278.0 483.6,250.5" fill="url(#gBL)"/>
<clipPath id="cBL"><polygon points="470.4,250.5 466.0,262.0 461.5,271.0 456.2,289.2 450.2,306.0 445.0,322.7 441.0,342.3 440.0,359.0 442.0,373.0 447.6,384.3 455.0,392.0 463.0,394.0 474.0,393.4 470.0,387.0 467.5,375.0 466.2,352.0 467.8,334.0 471.7,306.0 477.2,278.0 483.6,250.5"/></clipPath>
<filter id="fb1" x="-20%" y="-20%" width="140%" height="140%"><feGaussianBlur stdDeviation="2.2"/></filter>
<g clip-path="url(#cBL)"><polygon points="482.6,252.0 478.0,262.0 471.0,278.0 459.7,305.0 454.0,334.0 452.4,352.0 455.0,375.0 461.0,388.0 468.0,394.0 475.5,393.4 471.5,387.0 469.0,375.0 467.7,352.0 469.3,334.0 473.2,306.0 478.7,278.0 485.1,250.5" fill="#b67c2b" filter="url(#fb1)"/></g>
<polygon points="483.6,250.5 477.2,278.0 471.7,306.0 467.8,334.0 466.2,352.0 467.5,375.0 470.0,387.0 474.0,393.4 485.0,395.6 495.0,396.6 495.0,396.4 495.4,340.0 496.0,305.0 497.5,250.5" fill="url(#gBCL)"/>
<polygon points="497.5,250.5 496.0,305.0 495.4,340.0 495.0,396.4 497.4,396.6 510.0,396.0 526.0,393.6 526.0,393.6 530.0,387.0 532.4,375.0 533.3,360.0 532.5,340.0 528.7,306.0 522.6,278.0 516.0,250.5" fill="url(#gBCR)"/>
<polygon points="516.0,250.5 522.6,278.0 528.7,306.0 532.5,340.0 533.3,360.0 532.4,375.0 530.0,387.0 526.0,393.6 537.4,394.0 545.4,392.0 552.8,384.3 558.4,373.0 560.4,359.0 559.4,342.3 555.4,322.7 550.2,306.0 544.2,289.2 538.9,271.0 534.4,262.0 530.0,250.5" fill="url(#gBR)"/>
<clipPath id="cBR"><polygon points="516.0,250.5 522.6,278.0 528.7,306.0 532.5,340.0 533.3,360.0 532.4,375.0 530.0,387.0 526.0,393.6 537.4,394.0 545.4,392.0 552.8,384.3 558.4,373.0 560.4,359.0 559.4,342.3 555.4,322.7 550.2,306.0 544.2,289.2 538.9,271.0 534.4,262.0 530.0,250.5"/></clipPath>
<filter id="fb3" x="-20%" y="-20%" width="140%" height="140%"><feGaussianBlur stdDeviation="0.9"/></filter>
<g clip-path="url(#cBR)"><polygon points="514.5,250.5 521.1,278.0 527.2,306.0 531.0,340.0 531.8,360.0 530.9,375.0 532.3,378.0 540.3,375.0 544.5,366.5 545.9,356.0 548.0,352.5 546.2,349.0 544.6,344.0 543.0,327.0 538.0,306.0 534.0,290.0 529.6,272.0 525.2,254.0 524.6,250.5" fill="#e3b158" filter="url(#fb3)"/><polyline points="518.2,250.5 524.8,278.0 530.9,306.0 534.7,340.0 535.5,360.0 534.6,375.0 532.2,387.0 528.2,393.6" fill="none" stroke="#efc468" stroke-width="4.4" filter="url(#fb3)"/></g>
<polyline points="483.6,250.5 477.2,278.0 471.7,306.0 467.8,334.0 466.2,352.0 467.5,375.0 470.0,387.0 474.0,393.4" fill="none" stroke="#1a0e04" stroke-width="0.7" opacity="0.85"/>
<polyline points="516.0,250.5 522.6,278.0 528.7,306.0 532.5,340.0 533.3,360.0 532.4,375.0 530.0,387.0 526.0,393.6" fill="none" stroke="#1a0e04" stroke-width="0.7" opacity="0.85"/>
<path d="M489,397 Q500,398.4 511,397 L510,398.6 L490,398.6 Z" fill="#5a3010"/>
<circle cx="500.3" cy="339.2" r="19.5" fill="#ead2c4"/>
<clipPath id="cbtn"><rect x="501" y="300" width="40" height="80"/></clipPath>
<circle cx="500.3" cy="339.2" r="19.5" fill="#c2926e" clip-path="url(#cbtn)"/>
<circle cx="500.3" cy="339.2" r="15.2" fill="none" stroke="#7a5a48" stroke-width="0.5" opacity="0.7"/>
<rect x="492.2" y="332" width="2.9" height="15" rx="1.2" fill="#15100c"/>
<rect x="504" y="332" width="2.9" height="15" rx="1.2" fill="#15100c"/>
<g id="cursor3d">
<g stroke="#0a0a0a" stroke-width="1"><line x1="500.4" y1="508.8" x2="500.4" y2="520.4"/><line x1="500.4" y1="534.4" x2="500.4" y2="546.6"/><line x1="480.6" y1="527.5" x2="493.4" y2="527.5"/><line x1="507.4" y1="527.5" x2="519.6" y2="527.5"/></g>
<circle cx="500.4" cy="527.5" r="10" fill="none" stroke="#f2f2f2" stroke-width="1.1"/>
<circle cx="500.4" cy="527.5" r="10" fill="none" stroke="#e02020" stroke-width="1.1" stroke-dasharray="3.93 3.93" stroke-dashoffset="1.5"/>
</g>

<!-- ===== top strip / edges ===== -->
<rect x="0" y="0" width="1000" height="1.4" fill="#2b2b2b"/>
<rect x="10.5" y="0" width="26.5" height="1.2" fill="#1e1e1e"/>
<rect x="60.2" y="0" width="2" height="1.3" fill="#e6e6e6"/>
<rect x="0" y="0" width="1.3" height="572" fill="#232323"/>
<!-- ===== toolbar ===== -->
<g id="toolbar">
<rect x="9.2" y="35.9" width="38.3" height="66.1" rx="3.5" fill="#2c2c2c"/>
<rect x="9.2" y="67.6" width="38.3" height="0.8" fill="#383838"/>
<rect x="9.2" y="108.9" width="38.3" height="134" rx="3.5" fill="#2c2c2c"/>
<path d="M9.2,141.3 V112.4 a3.5,3.5 0 0 1 3.5,-3.5 H44 a3.5,3.5 0 0 1 3.5,3.5 V141.3 Z" fill="#5680c2"/>
<rect x="9.2" y="174.6" width="38.3" height="0.8" fill="#383838"/>
<rect x="9.2" y="209.6" width="38.3" height="0.8" fill="#383838"/>
<rect x="9.2" y="250.4" width="38.3" height="65.4" rx="3.5" fill="#2c2c2c"/>
<rect x="9.2" y="282.3" width="38.3" height="0.8" fill="#383838"/>
<!-- select box -->
<rect x="16.9" y="42.5" width="20.8" height="20.6" rx="1.5" fill="none" stroke="#e0a84e" stroke-width="1.3" stroke-dasharray="4.2 2.2" stroke-dashoffset="1"/>
<path d="M23.8,47.3 L31.9,54.9 L27.6,55.2 L24.4,58.4 Z" fill="#f0f0f0"/>
<path d="M42,66.2 L45.9,62.3 V66.2 Z" fill="#8a8a8a"/>
<!-- cursor tool -->
<circle cx="27.4" cy="85.5" r="10.9" fill="none" stroke="#ececec" stroke-width="1.6"/>
<circle cx="27.4" cy="85.5" r="10.9" fill="none" stroke="#c23a3a" stroke-width="1.6" stroke-dasharray="4.28 4.28" stroke-dashoffset="2"/>
<g stroke="#bdbdbd" stroke-width="1.3"><line x1="19.6" y1="85.5" x2="24.7" y2="85.5"/><line x1="30.1" y1="85.5" x2="35.2" y2="85.5"/><line x1="27.4" y1="78" x2="27.4" y2="83"/><line x1="27.4" y1="88" x2="27.4" y2="93"/></g>
<!-- move -->
<g fill="#e4ebf7" stroke="none">
<path d="M27.1,114.3 L30.2,118.6 H24 Z"/><path d="M27.1,137.1 L30.2,132.8 H24 Z"/>
<path d="M15.7,125.7 L20,122.6 V128.8 Z"/><path d="M38.5,125.7 L34.2,122.6 V128.8 Z"/>
<rect x="26.4" y="119.4" width="1.4" height="2.8"/><rect x="26.4" y="129.2" width="1.4" height="2.8"/>
<rect x="20.8" y="125" width="2.8" height="1.4"/><rect x="30.6" y="125" width="2.8" height="1.4"/>
</g>
<!-- rotate -->
<g fill="none" stroke="#d8d8d8" stroke-width="1.4">
<path d="M18.4,157.8 A8.8,8.8 0 0 1 33.8,153.1"/>
<path d="M35.8,159.8 A8.8,8.8 0 0 1 20.4,164.5"/>
</g>
<path d="M15.4,157.9 H21.2 L18.3,162.2 Z" fill="#e6e6e6"/>
<path d="M33.1,160.2 H38.9 L36,155.9 Z" fill="#e6e6e6"/>
<path d="M27.1,155.6 L30.3,158.8 L27.1,162 L23.9,158.8 Z" fill="#c4c4c4"/>
<!-- scale -->
<rect x="19.3" y="185.2" width="15.8" height="15.4" fill="none" stroke="#b4b4b4" stroke-width="1.2"/>
<rect x="18.5" y="193" width="8.8" height="8.6" fill="#e4e4e4" stroke="#2c2c2c" stroke-width="0.8"/>
<line x1="28.4" y1="192.2" x2="32.4" y2="188.2" stroke="#e4e4e4" stroke-width="1.3"/>
<path d="M34,186.6 L33.6,190.6 L30,187 Z" fill="#e4e4e4"/>
<path d="M42,207.6 L45.9,203.7 V207.6 Z" fill="#8a8a8a"/>
<!-- transform -->
<circle cx="27.1" cy="227.1" r="9.2" fill="none" stroke="#cfcfcf" stroke-width="1.2" stroke-dasharray="8.6 5.85" stroke-dashoffset="-2.9"/>
<rect x="23.2" y="223.2" width="7.8" height="7.8" rx="0.8" fill="#e6e6e6"/>
<g fill="#e6e6e6"><path d="M27.1,216.2 L30.1,219.9 H24.1 Z"/><path d="M27.1,238 L30.1,234.3 H24.1 Z"/><path d="M16.2,227.1 L19.9,224.1 V230.1 Z"/><path d="M38,227.1 L34.3,224.1 V230.1 Z"/></g>
<!-- annotate -->
<path d="M16,272.2 L16.6,268.8 L28.6,257.4 L31.6,260.4 L19.4,271.6 Z" fill="#ececec"/>
<path d="M17.8,268.2 L19.6,270.4" stroke="#2c2c2c" stroke-width="0.7"/>
<path d="M26.9,259 L29.9,262" stroke="#2c2c2c" stroke-width="0.7"/>
<path d="M16.8,274.2 C22,278.6 27,275 30,271.6 C33.4,268 37,270.4 39.3,273.8" fill="none" stroke="#7fd6a4" stroke-width="1.3"/>
<path d="M42,280.8 L45.9,276.9 V280.8 Z" fill="#8a8a8a"/>
<!-- measure -->
<path d="M23.4,308.4 V298 A10.6,10.6 0 0 1 34,308.4 Z" fill="#7fd6a4"/>
<path d="M23.4,295.3 A13.2,13.2 0 0 1 36.6,308.4" fill="none" stroke="#7fd6a4" stroke-width="1.1"/>
<rect x="18.6" y="289" width="5" height="22.4" fill="#e8e8e8"/>
<rect x="18.6" y="308.4" width="20.6" height="3.2" fill="#e8e8e8"/>
<g stroke="#2c2c2c" stroke-width="0.8"><line x1="21" y1="292" x2="23.6" y2="292"/><line x1="21" y1="295" x2="23.6" y2="295"/><line x1="21" y1="298" x2="23.6" y2="298"/><line x1="21" y1="301" x2="23.6" y2="301"/><line x1="21" y1="304" x2="23.6" y2="304"/><line x1="21" y1="307" x2="23.6" y2="307"/>
<line x1="25" y1="309.6" x2="25" y2="311.6"/><line x1="27.6" y1="309.6" x2="27.6" y2="311.6"/><line x1="30.2" y1="309.6" x2="30.2" y2="311.6"/><line x1="32.8" y1="309.6" x2="32.8" y2="311.6"/><line x1="35.4" y1="309.6" x2="35.4" y2="311.6"/><line x1="38" y1="309.6" x2="38" y2="311.6"/></g>
</g>
<!-- ===== header ===== -->
<g id="hdr">
<rect x="10.2" y="6" width="104.6" height="16.8" rx="3.2" fill="#2a2a2a"/>
<rect x="121.7" y="6" width="36.5" height="16.8" rx="3.2" fill="#343434"/>
<rect x="160.8" y="6" width="42.1" height="16.8" rx="3.2" fill="#343434"/>
<rect x="205.4" y="6" width="30.2" height="16.8" rx="3.2" fill="#343434"/>
<rect x="238.2" y="6" width="44.2" height="16.8" rx="3.2" fill="#343434"/>
<!-- object mode icon -->
<rect x="16.9" y="10.4" width="7.6" height="7.8" fill="#e0e0e0"/>
<g fill="none" stroke="#c8c8c8" stroke-width="1.1"><path d="M14.2,10.8 V8.4 H17"/><path d="M24.4,8.4 H27.2 V10.8"/><path d="M14.2,17.8 V20.2 H17"/><path d="M24.4,20.2 H27.2 V17.8"/></g>
<path d="M105.4,13.1 L108.8,16.3 L112.2,13.1" fill="none" stroke="#c0c0c0" stroke-width="1.5" stroke-linecap="round" stroke-linejoin="round"/>
<!-- visibility -->
<rect x="751.2" y="6" width="28.8" height="17" rx="3.2" fill="#2a2a2a"/>
<path d="M756,11.3 Q761.5,4.6 767,11.3 Q761.5,17.8 756,11.3 Z" fill="#e4e4e4"/>
<circle cx="761.5" cy="11.2" r="2.6" fill="#858585"/><circle cx="761.5" cy="11.2" r="1.2" fill="#e4e4e4"/>
<path d="M752.6,13.8 L760.8,16.8 L757.8,18.2 L756.2,22 Z" fill="#2a2a2a" stroke="#2a2a2a" stroke-width="1.6" stroke-linejoin="round"/>
<path d="M752.6,13.8 L760.8,16.8 L757.8,18.2 L756.2,22 Z" fill="#e4e4e4"/>
<path d="M771.3,13.4 L774.4,16.4 L777.5,13.4" fill="none" stroke="#b4b4b4" stroke-width="1.6" stroke-linecap="round" stroke-linejoin="round"/>
<!-- gizmo -->
<path d="M804.7,5.8 V23.4 H790.2 a3.2,3.2 0 0 1 -3.2,-3.2 V9 a3.2,3.2 0 0 1 3.2,-3.2 Z" fill="#5680c2"/>
<path d="M804.7,5.8 H820.6 a3.2,3.2 0 0 1 3.2,3.2 V20.2 a3.2,3.2 0 0 1 -3.2,3.2 H804.7 Z" fill="#2a2a2a"/>
<path d="M789.4,9.9 A11.2,11.2 0 0 1 800.5,21.2" fill="none" stroke="#e6ecf8" stroke-width="1.4"/>
<line x1="792.2" y1="18.2" x2="801" y2="9.8" stroke="#e6ecf8" stroke-width="1.4"/>
<path d="M803.2,7.6 L802.6,12.2 L798.6,8.2 Z" fill="#f0f4fc"/>
<circle cx="791.1" cy="19.3" r="1.7" fill="#5680c2" stroke="#e6ecf8" stroke-width="1.2"/>
<path d="M811.2,13.4 L814.2,16.4 L817.2,13.4" fill="none" stroke="#b4b4b4" stroke-width="1.6" stroke-linecap="round" stroke-linejoin="round"/>
<!-- overlay -->
<path d="M848.6,5.8 V23.4 H834.2 a3.2,3.2 0 0 1 -3.2,-3.2 V9 a3.2,3.2 0 0 1 3.2,-3.2 Z" fill="#5680c2"/>
<path d="M848.6,5.8 H864.2 a3.2,3.2 0 0 1 3.2,3.2 V20.2 a3.2,3.2 0 0 1 -3.2,3.2 H848.6 Z" fill="#2a2a2a"/>
<circle cx="841.8" cy="12" r="4.5" fill="#f4f6fb"/>
<circle cx="837.2" cy="16.6" r="3.9" fill="none" stroke="#e6ecf8" stroke-width="1.2" stroke-dasharray="18.4 6.1" stroke-dashoffset="-1.5"/>
<path d="M837.6,12.8 A3.9,3.9 0 0 1 841,16" fill="none" stroke="#5680c2" stroke-width="1.1"/>
<path d="M854.9,13.4 L857.9,16.4 L860.9,13.4" fill="none" stroke="#b4b4b4" stroke-width="1.6" stroke-linecap="round" stroke-linejoin="round"/>
<!-- xray -->
<rect x="874.6" y="5.8" width="17.5" height="17.6" rx="3.2" fill="#49689c"/>
<rect x="880.2" y="8.2" width="9.4" height="9.2" rx="1" fill="none" stroke="#a9bde0" stroke-width="1"/>
<rect x="876.4" y="11.4" width="10.4" height="9.6" rx="1" fill="#49689c" fill-opacity="0.75" stroke="#b4c6e6" stroke-width="1.1"/>
<g fill="#a9bde0"><rect x="881" y="13.4" width="1" height="1"/><rect x="881" y="16.6" width="1" height="1.6"/><rect x="883" y="17.2" width="1" height="1"/><rect x="884.8" y="17.2" width="1" height="1"/></g>
<!-- shading -->
<path d="M972.2,6 H902.4 a3.2,3.2 0 0 0 -3.2,3.2 V19.8 a3.2,3.2 0 0 0 3.2,3.2 H972.2 Z" fill="#575757"/>
<rect x="916.4" y="6" width="0.9" height="17" fill="#454545"/><rect x="935.2" y="6" width="0.9" height="17" fill="#454545"/><rect x="953.3" y="6" width="0.9" height="17" fill="#454545"/>
<rect x="954.2" y="6" width="18" height="17" fill="#5680c2"/>
<path d="M972.2,6 H988 a3.2,3.2 0 0 1 3.2,3.2 V19.8 a3.2,3.2 0 0 1 -3.2,3.2 H972.2 Z" fill="#2a2a2a"/>
<!-- wire -->
<g fill="none" stroke="#d2d2d2" stroke-width="1.15"><circle cx="908.1" cy="14.4" r="6.3"/><line x1="908.1" y1="8.1" x2="908.1" y2="20.7"/><line x1="902.6" y1="11.7" x2="913.6" y2="11.7"/><line x1="902.6" y1="17.1" x2="913.6" y2="17.1"/></g>
<!-- solid -->
<circle cx="926" cy="14.4" r="6.9" fill="#cdcdcd"/>
<!-- material -->
<circle cx="944.4" cy="14.4" r="6.3" fill="#c6c6c6" stroke="#d2d2d2" stroke-width="1"/>
<path d="M945.2,8.4 A6,6 0 0 1 950.4,15.2 L945.2,15.2 Z" fill="#444"/>
<path d="M939,16.6 Q943.4,17.4 945.2,15.2 L950.4,15.2 A6,6 0 0 1 939,16.6 Z" fill="#8c8c8c"/>
<path d="M939,16.6 Q941,19.6 944.4,20.3 Q941.6,18.4 941,16.9 Z" fill="#5c5c5c"/>
<!-- rendered -->
<circle cx="963.2" cy="14.4" r="6.3" fill="none" stroke="#f2f5fb" stroke-width="1.3"/>
<path d="M958.8,13.6 A4.6,4.6 0 0 1 963,9.8" fill="none" stroke="#f2f5fb" stroke-width="1.3" stroke-linecap="round"/>
<g stroke="#dfe7f6" stroke-width="0.6"><line x1="968" y1="14" x2="969" y2="14.4"/><line x1="967.6" y1="15.6" x2="968.8" y2="16.2"/><line x1="966.8" y1="17" x2="967.8" y2="17.8"/><line x1="965.6" y1="18.2" x2="966.2" y2="19.2"/><line x1="964.2" y1="18.8" x2="964.6" y2="19.8"/></g>
<path d="M978.7,13.5 L981.7,16.4 L984.7,13.5" fill="none" stroke="#b4b4b4" stroke-width="1.6" stroke-linecap="round" stroke-linejoin="round"/>
</g>
<!-- ===== nav gizmo ===== -->
<g id="gizmo">
<circle cx="918.9" cy="75.7" r="6" fill="#8c2435"/>
<circle cx="950.3" cy="107" r="6" fill="#1c4f8e"/>
<line x1="950.3" y1="51" x2="950.3" y2="66" stroke="#2a8cf4" stroke-width="2"/>
<line x1="960" y1="75.8" x2="975.4" y2="75.8" stroke="#f73a56" stroke-width="2"/>
<circle cx="950.3" cy="44.2" r="7.1" fill="#2a8ff8"/>
<circle cx="950.3" cy="75.7" r="7.1" fill="#84c308"/>
<circle cx="982.2" cy="75.7" r="7.1" fill="#fb3655"/>
<g font-family="'DejaVu Sans','Liberation Sans',sans-serif" font-size="8.8px" text-anchor="middle">
<text x="950.3" y="47.4" fill="#0d3566">Z</text>
<text x="950.3" y="78.9" fill="#2f4a00">Y</text>
<text x="982.2" y="78.9" fill="#6e0f1e">X</text>
</g>
<!-- sidebar toggle -->
<path d="M1000,42.6 H995 a3,3 0 0 0 -3,3 V51.4 a3,3 0 0 0 3,3 H1000 Z" fill="#2c2c2c"/>
<path d="M997.6,45.4 L994.6,48.5 L997.6,51.6" fill="none" stroke="#b0b0b0" stroke-width="1.3" stroke-linecap="round" stroke-linejoin="round"/>
<!-- nav buttons -->
<g fill="#2e2e2e" fill-opacity="0.96"><circle cx="976.7" cy="129.6" r="13.1"/><circle cx="976.7" cy="158.9" r="13.1"/><circle cx="976.7" cy="188.6" r="13.1"/><circle cx="976.7" cy="218" r="13.1"/></g>
<!-- zoom -->
<circle cx="978.5" cy="128.6" r="6.6" fill="#e4e4e4"/>
<line x1="973.6" y1="133.4" x2="969.8" y2="137" stroke="#e4e4e4" stroke-width="2.2" stroke-linecap="round"/>
<g stroke="#2e2e2e" stroke-width="1.3"><line x1="975.2" y1="128.6" x2="981.8" y2="128.6"/><line x1="978.5" y1="125.3" x2="978.5" y2="131.9"/></g>
<!-- hand -->
<path d="M972.4,163.4 L969.2,160.2 Q968.2,158.8 969.6,158.4 Q971,158 973,159.8 L974.2,160.8 L973.4,153.2 Q973.4,152 974.4,152 Q975.4,152 975.6,153.2 L976.4,158.2 L976.6,151.4 Q976.7,150.2 977.7,150.2 Q978.7,150.2 978.8,151.4 L979,158.2 L980.2,152.4 Q980.5,151.3 981.4,151.5 Q982.3,151.7 982.2,152.9 L981.6,159 L983.2,155.4 Q983.7,154.4 984.5,154.7 Q985.3,155.1 985,156.2 L983.4,162.4 Q982.4,166.8 978.2,166.8 Q974.6,166.8 972.4,163.4 Z" fill="#e8e8e8"/>
<!-- camera -->
<circle cx="972.3" cy="186.2" r="3.1" fill="#e6e6e6"/><circle cx="979.2" cy="185.4" r="3.9" fill="#e6e6e6"/>
<circle cx="972.3" cy="186.2" r="1" fill="#7a7a7a"/><circle cx="979.2" cy="185.4" r="1.2" fill="#7a7a7a"/>
<rect x="972.6" y="190.8" width="7.6" height="6.2" rx="0.8" fill="#e6e6e6"/>
<path d="M980.6,194 L984.6,191.6 V196.4 Z" fill="#e6e6e6"/>
<rect x="970.8" y="192.2" width="1.6" height="2.6" fill="#e6e6e6"/>
<!-- grid -->
<rect x="969" y="210.7" width="15.2" height="15" fill="#1f1f1f"/>
<g stroke="#ececec" stroke-width="1.2" fill="none"><rect x="969.2" y="210.9" width="14.8" height="14.6"/><line x1="974.1" y1="210.9" x2="974.1" y2="225.5"/><line x1="979.1" y1="210.9" x2="979.1" y2="225.5"/><line x1="969.2" y1="215.8" x2="984" y2="215.8"/><line x1="969.2" y1="220.7" x2="984" y2="220.7"/></g>
</g>
<!-- ===== bottom strip ===== -->
<path d="M0,567.7 H1000 V572 H0 Z M0,560 V572 H6 V567.7 H5.8 A4.5,4.5 0 0 1 1.3,563.2 V560 Z" fill="#212121"/>
<path d="M996,567.7 A4.5,4.5 0 0 0 1000,563.6 V567.7 Z" fill="#212121"/>
<path d="M4.2,572 V572 Q4.2,570.6 6.4,570.6 H1000 V572 Z" fill="#2d2d2d"/>

</svg>
<!-- header -->
<div class="t" style="left:34.5px;top:8.5px;color:#dcdcdc;-webkit-text-stroke:0.15px #dcdcdc">Object Mode</div>
<div class="t" style="left:127.5px;top:8.5px;color:#dcdcdc;-webkit-text-stroke:0.15px #dcdcdc">View</div>
<div class="t" style="left:166.3px;top:8.5px;color:#dcdcdc;-webkit-text-stroke:0.15px #dcdcdc">Select</div>
<div class="t" style="left:211.2px;top:8.5px;color:#dcdcdc;-webkit-text-stroke:0.15px #dcdcdc">Add</div>
<div class="t" style="left:244.1px;top:8.5px;color:#dcdcdc;-webkit-text-stroke:0.15px #dcdcdc">Object</div>
<!-- overlay text -->
<div class="t ov" style="left:75.2px;top:36.8px;letter-spacing:-0.05px">Front Orthographic</div>
<div class="t ov" style="left:75.2px;top:56.1px;letter-spacing:0.07px">(1) Daki (Upper Moon 6) | Sun.002</div>
<div class="t ov" style="left:75.2px;top:75.6px">Centimeters</div>
</div>
</body></html>
